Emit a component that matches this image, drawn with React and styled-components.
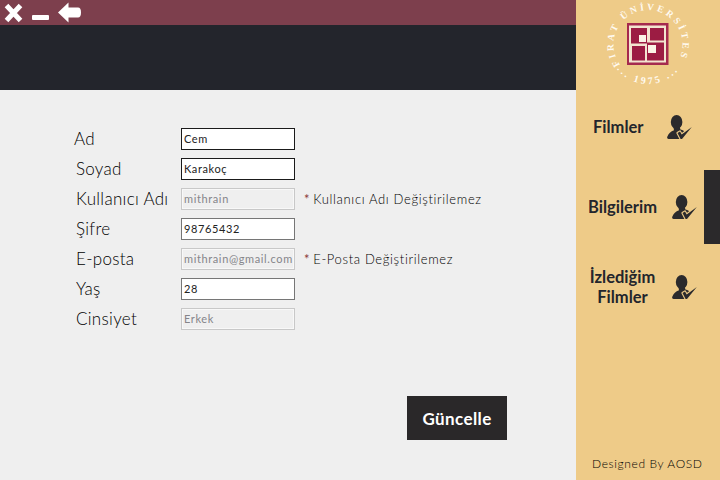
import React from "react";
import styled, { createGlobalStyle } from "styled-components";

const Global = createGlobalStyle`
  html, body { margin: 0; padding: 0; width: 720px; height: 480px; overflow: hidden; background: #efefef; }
  * { box-sizing: border-box; }
`;
const FONT = `Lato, "Open Sans", "Liberation Sans", sans-serif`;

const Page = styled.div`display:flex;width:720px;height:480px;font-family:${FONT};color:#2a2a30;`;
const Main = styled.main`flex:1;display:flex;flex-direction:column;background:#efefef;`;
const TitleBar = styled.div`height:25px;background:#7d3f4d;display:flex;align-items:center;padding-left:4px;gap:9px;`;
const Band = styled.div`height:65px;background:#23252c;`;
const Form = styled.form`padding:34px 0 0 76px;display:flex;flex-direction:column;`;
const Row = styled.div`display:flex;align-items:center;height:30px;`;
const Label = styled.label`
  width:105px;margin-left:${p => p.$shift || 0}px;padding-right:${p => -(p.$shift || 0)}px;flex:none;
  font-size:17px;font-weight:300;letter-spacing:.3px;color:#000;box-sizing:content-box;padding-bottom:1px;
`;
const Field = styled.input`
  width:114px;height:22px;padding:0 0 2px 2px;font:11px ${FONT};letter-spacing:.62px;outline:none;border-radius:0;
  color:${p => p.$locked ? "#85858a" : "#222"};
  background:${p => p.$locked ? "#efefef" : "#fff"};
  border:1px solid ${p => p.$locked ? "#c8c8c8" : p.$strong ? "#1a1a1a" : "#767676"};
  box-shadow:${p => p.$locked ? "inset 0 0 0 1px #f8f8f8" : "none"};
`;
const Note = styled.span`margin-left:9px;font-size:13px;font-weight:300;letter-spacing:.65px;color:#000;`;
const Star = styled.span`color:#8a3a3a;font-weight:400;margin-right:3px;`;
const Actions = styled.div`display:flex;justify-content:flex-end;padding:62px 69px 0 0;`;
const Save = styled.button`
  width:100px;height:44px;border:0;background:#2a2829;color:#fff;font:700 17px ${FONT};letter-spacing:.4px;
`;
const Side = styled.aside`width:144px;flex:none;background:#eecb88;display:flex;flex-direction:column;`;
const Logo = styled.div`height:87px;display:flex;justify-content:center;`;
const Item = styled.div`
  position:relative;height:80px;display:flex;align-items:center;padding-left:${p => p.$left}px;gap:${p => p.$gap}px;
`;
const ItemText = styled.div`
  width:${p => p.$width}px;text-align:center;font-weight:700;font-size:16.5px;line-height:20px;color:#23252c;
  white-space:nowrap;
`;
const ActiveTab = styled.div`position:absolute;right:0;top:3px;width:16px;height:74px;background:#2b292b;`;
const Footer = styled.div`margin-top:auto;padding:0 0 9px 16px;font-size:12px;font-weight:300;letter-spacing:.62px;color:#000;`;

const PersonCheck = () => (
  <svg width="26" height="26" viewBox="0 0 26 26" style={{ flex: "none" }}>
    <ellipse cx="9.6" cy="8" rx="5.8" ry="7" fill="#2b2a2c" />
    <path d="M6.4 13h6.4l.6 2.6c2.6.6 4.2 1.6 5 3l-2.4 6.4H1.6C.2 25-.2 23.8.4 22.4c1-2.6 3.4-5 6.6-6.2z" fill="#2b2a2c" />
    <path d="M10.5 19l2.5-1.5 1.7 3L24.8 13 15 25h-1.4z" fill="#2b2a2c" stroke="#eecb88" strokeWidth="2.2" paintOrder="stroke" strokeLinejoin="round" />
  </svg>
);

const Seal = () => (
  <svg width="100" height="87" viewBox="0 0 100 87">
    <defs>
      <path id="ring" d="M20.1 61.75 A34.5 34.5 0 1 1 79.9 61.75" fill="none" />
      <path id="year" d="M12.4 57.7 A40 40 0 0 0 87.6 57.7" fill="none" />
    </defs>
    <text fill="#fffaf0" fontFamily="Liberation Serif, serif" fontSize="9.5" fontWeight="700" letterSpacing="2.9">
      <textPath href="#ring" startOffset="50%" textAnchor="middle">FIRAT ÜNİVERSİTESİ</textPath>
    </text>
    <text fill="#fffaf0" fontFamily="Liberation Serif, serif" fontSize="10" fontWeight="700" letterSpacing="2.6">
      <textPath href="#year" startOffset="50%" textAnchor="middle">... 1975 ...</textPath>
    </text>
    <rect x="29" y="23" width="41.5" height="42" fill="#a52a4e" />
    <rect x="31" y="25.5" width="37" height="37" fill="#f3e4d0" />
    <rect x="33" y="28" width="16" height="15.5" fill="#9c1c43" />
    <rect x="52" y="28" width="14" height="12.5" fill="#9c1c43" />
    <rect x="34" y="46" width="13" height="14.5" fill="#9c1c43" />
    <rect x="49" y="42.5" width="17" height="18" fill="#9c1c43" />
    <rect x="41" y="35" width="7" height="7" fill="#fbf3e6" />
    <rect x="50" y="45" width="8" height="8" fill="#fbf3e6" />
  </svg>
);

const CloseIcon = () => (
  <svg width="19" height="20" viewBox="0 0 19 20"><path d="M2.5 2.5L16.5 17.5M16.5 2.5L2.5 17.5" stroke="#fff" strokeWidth="5" /></svg>
);
const MinIcon = () => (
  <svg width="17" height="5" viewBox="0 0 17 5" style={{ marginTop: 10 }}><rect width="17" height="5" rx="1" fill="#fff" /></svg>
);
const BackIcon = () => (
  <svg width="23" height="21" viewBox="0 0 23 21"><path d="M10.5 0.5L0 10.5l10.5 10v-5h9.5c2 0 3-1.6 3-5s-1-5-3-5h-9.5z" fill="#fff" /></svg>
);

const fields = [
  { label: "Ad", value: "Cem", strong: true, shift: -2 },
  { label: "Soyad", value: "Karakoç", strong: true },
  { label: "Kullanıcı Adı", value: "mithrain", locked: true, note: "Kullanıcı Adı Değiştirilemez" },
  { label: "Şifre", value: "98765432" },
  { label: "E-posta", value: "mithrain@gmail.com", locked: true, note: "E-Posta Değiştirilemez" },
  { label: "Yaş", value: "28" },
  { label: "Cinsiyet", value: "Erkek", locked: true },
];

export default function App() {
  return (
    <Page>
      <Global />
      <Main>
        <TitleBar><CloseIcon /><MinIcon /><BackIcon /></TitleBar>
        <Band />
        <Form onSubmit={e => e.preventDefault()}>
          {fields.map(f => (
            <Row key={f.label}>
              <Label $shift={f.shift}>{f.label}</Label>
              <Field value={f.value} readOnly $locked={f.locked} $strong={f.strong} />
              {f.note && <Note><Star>*</Star>{f.note}</Note>}
            </Row>
          ))}
          <Actions><Save type="button">Güncelle</Save></Actions>
        </Form>
      </Main>
      <Side>
        <Logo><Seal /></Logo>
        <Item $left={17} $gap={24}><ItemText $width={50}>Filmler</ItemText><PersonCheck /></Item>
        <Item $left={11} $gap={14}><ItemText $width={71}>Bilgilerim</ItemText><PersonCheck /><ActiveTab /></Item>
        <Item $left={11} $gap={14}><ItemText $width={71}>İzlediğim<br />Filmler</ItemText><PersonCheck /></Item>
        <Footer>Designed By AOSD</Footer>
      </Side>
    </Page>
  );
}
